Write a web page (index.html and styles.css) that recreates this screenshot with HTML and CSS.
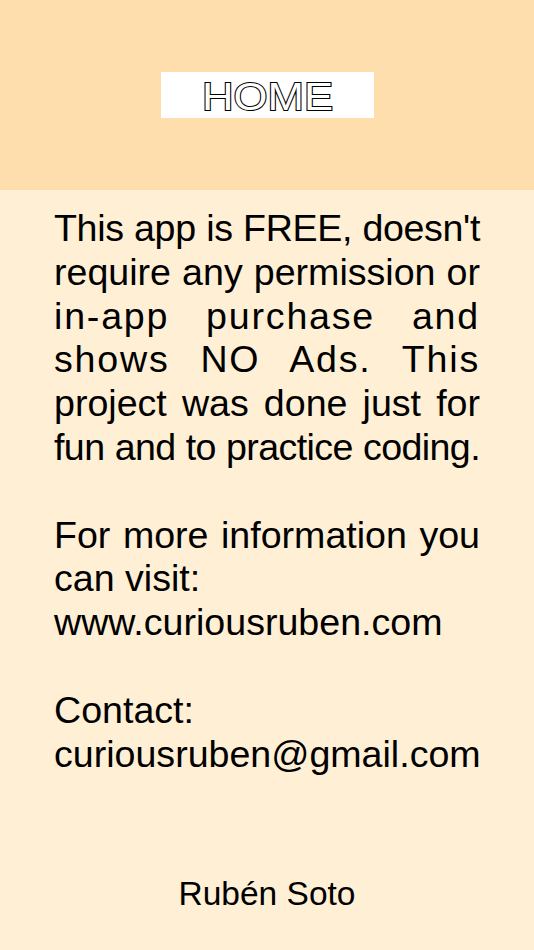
FILE: index.html
```html
<!DOCTYPE html>
<html>
<head>
<meta charset="utf-8">
<link rel="stylesheet" href="styles.css">
</head>
<body>
<div class="page">
  <header class="header">
    <div class="home-btn"><span class="home-text">HOME</span></div>
  </header>
  <main class="content">
    <p class="info">
      <span class="line fill tight">This app is FREE, doesn't</span>
      <span class="line fill">require any permission or</span>
      <span class="line fill wide">in-app purchase and</span>
      <span class="line fill wide">shows NO Ads. This</span>
      <span class="line fill">project was done just for</span>
      <span class="line fill tighter">fun and to practice coding.</span>
    </p>
    <p class="info gap">
      <span class="line fill">For more information you</span>
      <span class="line">can visit:</span>
      <span class="line">www.curiousruben.com</span>
    </p>
    <p class="info gap">
      <span class="line">Contact:</span>
      <span class="line">curiousruben@gmail.com</span>
    </p>
  </main>
  <footer class="footer">Rubén Soto</footer>
</div>
</body>
</html>
```

FILE: styles.css
```css
html, body {
  margin: 0;
  padding: 0;
}
body {
  font-family: "Liberation Sans", Arial, sans-serif;
  background: #FFEFD5;
  color: #000;
}
.page {
  width: 534px;
  height: 950px;
  display: flex;
  flex-direction: column;
}
.header {
  height: 190px;
  background: #FFDEAD;
  display: flex;
  justify-content: center;
  align-items: flex-start;
  padding-top: 72px;
  box-sizing: border-box;
}
.home-btn {
  width: 213px;
  height: 46px;
  background: #fff;
  display: flex;
  justify-content: center;
  align-items: center;
}
.home-text {
  display: inline-block;
  font-size: 39px;
  line-height: 1;
  color: #fff;
  -webkit-text-stroke: 2px #000;
  paint-order: stroke fill;
  transform: scaleX(1.12);
  margin-top: 2px;
}
.content {
  flex: 1;
  padding: 17px 54px 0 54px;
}
.info {
  margin: 0;
  font-size: 37.6px;
  line-height: 43.8px;
}
.line {
  display: block;
  white-space: nowrap;
  text-align: left;
}
.fill {
  text-align: justify;
  text-align-last: justify;
}
.tight {
  letter-spacing: -0.35px;
}
.tighter {
  letter-spacing: -0.6px;
}
.wide {
  letter-spacing: 1.8px;
}
.gap {
  margin-top: 43.8px;
}
.footer {
  text-align: center;
  font-size: 33.5px;
  line-height: 38px;
  padding-bottom: 37px;
}
```
